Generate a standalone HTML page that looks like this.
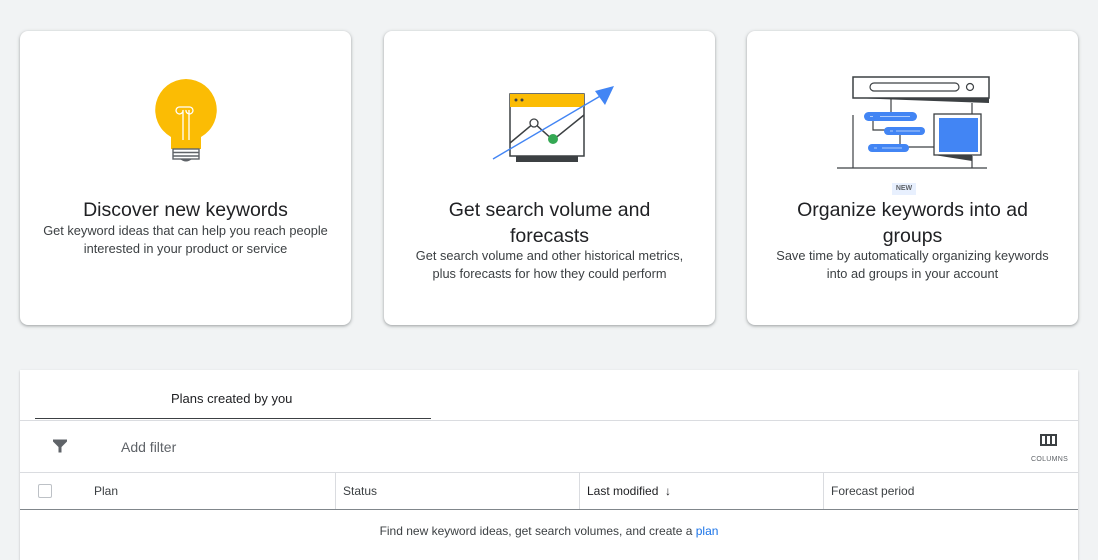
<!DOCTYPE html>
<html><head><meta charset="utf-8"><style>
body{margin:0;width:1098px;height:552px;background:#f1f3f4;font-family:"Liberation Sans",Arial,sans-serif;position:relative;overflow:hidden;color:#202124}
.card{position:absolute;top:31px;width:331px;height:294px;background:#fff;border-radius:8px;box-shadow:0 1px 2px rgba(60,64,67,.3),0 1px 3px 1px rgba(60,64,67,.15);text-align:center}
.card h2{position:absolute;left:0;right:0;top:166px;margin:0;font-weight:400;font-size:19.5px;line-height:26px;color:#202124}
.card p{position:absolute;left:0;right:0;margin:0;font-size:12.8px;line-height:18px;color:#3c4043}
.panel{position:absolute;left:20px;top:370px;width:1058px;height:190px;background:#fff;box-shadow:0 1px 2px rgba(60,64,67,.3)}
.a{position:absolute;font-size:13px;color:#3c4043}
</style></head><body>
<div class="card" style="left:20px">
<svg style="position:absolute;left:134px;top:47px" width="64" height="85" viewBox="0 0 64 85">
<path d="M32 1A31 31 0 0 0 17 59v12h30V59A31 31 0 0 0 32 1z" fill="#fbbc04"/>
<path d="M29 62V32M35 62V32M29 32a3.5 3.5 0 1 1-3-3h9a3.5 3.5 0 1 1-3 3" stroke="#fff" stroke-width="1.3" fill="none"/>
<rect x="19" y="71" width="26" height="10" fill="#fff" stroke="#5f6368" stroke-width="1.4"/>
<path d="M19 74.5h26M19 78h26" stroke="#5f6368" stroke-width="1.4"/>
<path d="M26 81q6 5 12 0" fill="#5f6368"/>
</svg>
<h2 style="top:166px">Discover new keywords</h2>
<p style="top:191px">Get keyword ideas that can help you reach people<br>interested in your product or service</p>
</div>
<div class="card" style="left:384px">
<svg style="position:absolute;left:106px;top:52px" width="126" height="80" viewBox="0 0 126 80">
<rect x="20" y="11" width="74" height="62" fill="#fff" stroke="#3c4043" stroke-width="1.5"/>
<rect x="20" y="11" width="74" height="13" fill="#fbbc04"/>
<circle cx="26" cy="17" r="1.5" fill="#3c4043"/><circle cx="32" cy="17" r="1.5" fill="#3c4043"/>
<rect x="26" y="73" width="62" height="6" fill="#3c4043"/>
<path d="M20 60L44 40L63 57L94 32" stroke="#3c4043" stroke-width="1.5" fill="none"/>
<circle cx="44" cy="40" r="4" fill="#fff" stroke="#3c4043" stroke-width="1.3"/>
<circle cx="63" cy="56" r="5" fill="#34a853"/>
<path d="M3 76L112 12" stroke="#4285f4" stroke-width="1.4"/>
<path d="M124 3L105 8L115 22z" fill="#4285f4"/>
</svg>
<h2>Get search volume and<br>forecasts</h2>
<p style="top:216px">Get search volume and other historical metrics,<br>plus forecasts for how they could perform</p>
</div>
<div class="card" style="left:747px">
<svg style="position:absolute;left:83px;top:34px" width="170" height="130" viewBox="0 0 170 130">
<rect x="23" y="12" width="136" height="21" fill="#fff" stroke="#3c4043" stroke-width="1.5"/>
<rect x="40" y="18" width="89" height="8" rx="4" fill="#fff" stroke="#3c4043" stroke-width="1.2"/>
<circle cx="140" cy="22" r="3.5" fill="#fff" stroke="#3c4043" stroke-width="1.2"/>
<path d="M23 33h136v5z" fill="#3c4043"/>
<path d="M61 33v14M43 52v13h14M70 69v11H56M104 82h-30M142 38v14M142 91v12M23 50v53M7 103h150" stroke="#3c4043" stroke-width="1.2" fill="none"/>
<rect x="34" y="47" width="53" height="9" rx="4.5" fill="#4285f4"/>
<rect x="54" y="62" width="41" height="8" rx="4" fill="#4285f4"/>
<rect x="38" y="79" width="41" height="8" rx="4" fill="#4285f4"/>
<path d="M40 51.5h3M50 51.5h30M60 66h3M66 66h24M44 83h3M52 83h20" stroke="#aecbfa" stroke-width="1"/>
<rect x="104" y="49" width="47" height="41" fill="#fff" stroke="#3c4043" stroke-width="1.3"/>
<rect x="109" y="53" width="39" height="34" fill="#4285f4"/>
<path d="M104 90h38v6z" fill="#3c4043"/>
</svg>
<div style="position:absolute;left:145px;top:152px;width:24px;height:12px;background:#e8f0fe;color:#5f6368;font-size:7px;line-height:12px;font-weight:bold">NEW</div>
<h2 style="top:166px">Organize keywords into ad<br>groups</h2>
<p style="top:216px">Save time by automatically organizing keywords<br>into ad groups in your account</p>
</div>
<div class="panel">
<div class="a" style="left:151px;top:21px;color:#202124">Plans created by you</div>
<div style="position:absolute;left:15px;top:48px;width:396px;height:1px;background:#3c4043"></div>
<div style="position:absolute;left:0;top:50px;width:1058px;height:1px;background:#dadce0"></div>
<svg style="position:absolute;left:32px;top:68px" width="16" height="16" viewBox="0 0 16 16"><path d="M1 1.5h14v2L9.5 9v5.5h-3V9L1 3.5z" fill="#5f6368"/></svg>
<div class="a" style="left:101px;top:69px;font-size:14px;color:#5f6368">Add filter</div>
<svg style="position:absolute;left:1020px;top:64px" width="17" height="12" viewBox="0 0 17 12"><path d="M1 1h15v10H1zM6 1v10M11 1v10" stroke="#3c4043" stroke-width="2" fill="none"/></svg>
<div style="position:absolute;left:1011px;top:86px;font-size:7px;color:#5f6368;letter-spacing:.3px">COLUMNS</div>
<div style="position:absolute;left:0;top:102px;width:1058px;height:1px;background:#dadce0"></div>
<div style="position:absolute;left:18px;top:114px;width:12px;height:12px;border:1.5px solid #bdc1c6;border-radius:2px"></div>
<div class="a" style="left:74px;top:114px;font-size:12px">Plan</div>
<div style="position:absolute;left:315px;top:103px;width:1px;height:36px;background:#dadce0"></div>
<div class="a" style="left:323px;top:114px;font-size:12px">Status</div>
<div style="position:absolute;left:559px;top:103px;width:1px;height:36px;background:#dadce0"></div>
<div class="a" style="left:567px;top:114px;font-size:12px;color:#202124">Last modified &nbsp;↓</div>
<div style="position:absolute;left:803px;top:103px;width:1px;height:36px;background:#dadce0"></div>
<div class="a" style="left:811px;top:114px;font-size:12px">Forecast period</div>
<div style="position:absolute;left:0;top:139px;width:1058px;height:1px;background:#80868b"></div>
<div class="a" style="left:0;width:1058px;text-align:center;top:154px;font-size:12px">Find new keyword ideas, get search volumes, and create a <span style="color:#1a73e8">plan</span></div>
</div>
</body></html>
